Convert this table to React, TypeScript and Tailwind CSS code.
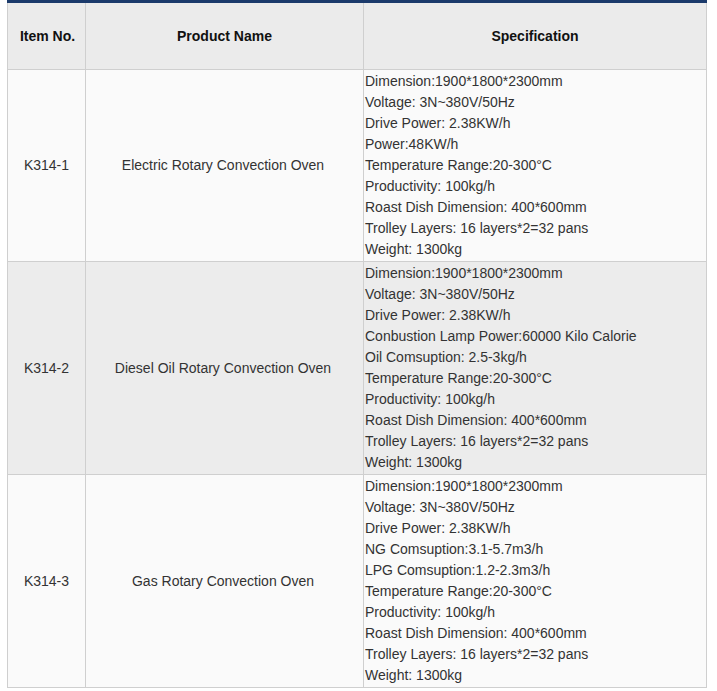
const rows = [
  {
    item: 'K314-1',
    name: 'Electric Rotary Convection Oven',
    bg: 'bg-[#fafafa]',
    specs: [
      'Dimension:1900*1800*2300mm',
      'Voltage: 3N~380V/50Hz',
      'Drive Power: 2.38KW/h',
      'Power:48KW/h',
      'Temperature Range:20-300°C',
      'Productivity: 100kg/h',
      'Roast Dish Dimension: 400*600mm',
      'Trolley Layers: 16 layers*2=32 pans',
      'Weight: 1300kg',
    ],
  },
  {
    item: 'K314-2',
    name: 'Diesel Oil Rotary Convection Oven',
    bg: 'bg-[#ececec]',
    specs: [
      'Dimension:1900*1800*2300mm',
      'Voltage: 3N~380V/50Hz',
      'Drive Power: 2.38KW/h',
      'Conbustion Lamp Power:60000 Kilo Calorie',
      'Oil Comsuption: 2.5-3kg/h',
      'Temperature Range:20-300°C',
      'Productivity: 100kg/h',
      'Roast Dish Dimension: 400*600mm',
      'Trolley Layers: 16 layers*2=32 pans',
      'Weight: 1300kg',
    ],
  },
  {
    item: 'K314-3',
    name: 'Gas Rotary Convection Oven',
    bg: 'bg-[#fafafa]',
    specs: [
      'Dimension:1900*1800*2300mm',
      'Voltage: 3N~380V/50Hz',
      'Drive Power: 2.38KW/h',
      'NG Comsuption:3.1-5.7m3/h',
      'LPG Comsuption:1.2-2.3m3/h',
      'Temperature Range:20-300°C',
      'Productivity: 100kg/h',
      'Roast Dish Dimension: 400*600mm',
      'Trolley Layers: 16 layers*2=32 pans',
      'Weight: 1300kg',
    ],
  },
];

export default function App() {
  return (
    <div className="bg-white min-h-screen pl-[7px] pr-[10px] font-['Liberation_Sans',Arial,sans-serif]">
      <table className="w-[700px] border-collapse border-t-[3px] border-t-[#1b3a6b] text-[14px] text-[#333]">
        <thead>
          <tr className="bg-[#ebebeb] h-[68px]">
            <th className="w-[78px] border border-[#cfcfcf] border-t-0 pl-[2px] font-bold text-[#111] text-center">Item No.</th>
            <th className="w-[278px] border border-[#cfcfcf] border-t-0 font-bold text-[#111] text-center">Product Name</th>
            <th className="border border-[#cfcfcf] border-t-0 font-bold text-[#111] text-center">Specification</th>
          </tr>
        </thead>
        <tbody>
          {rows.map((r) => (
            <tr key={r.item} className={r.bg}>
              <td className="border border-[#cfcfcf] text-center align-middle">{r.item}</td>
              <td className="border border-[#cfcfcf] pr-[3px] text-center align-middle">{r.name}</td>
              <td className="border border-[#cfcfcf] pl-[1px] py-[1px] align-middle">
                {r.specs.map((s) => (
                  <div key={s} className="leading-[21px] whitespace-nowrap">{s}</div>
                ))}
              </td>
            </tr>
          ))}
        </tbody>
      </table>
    </div>
  );
}
